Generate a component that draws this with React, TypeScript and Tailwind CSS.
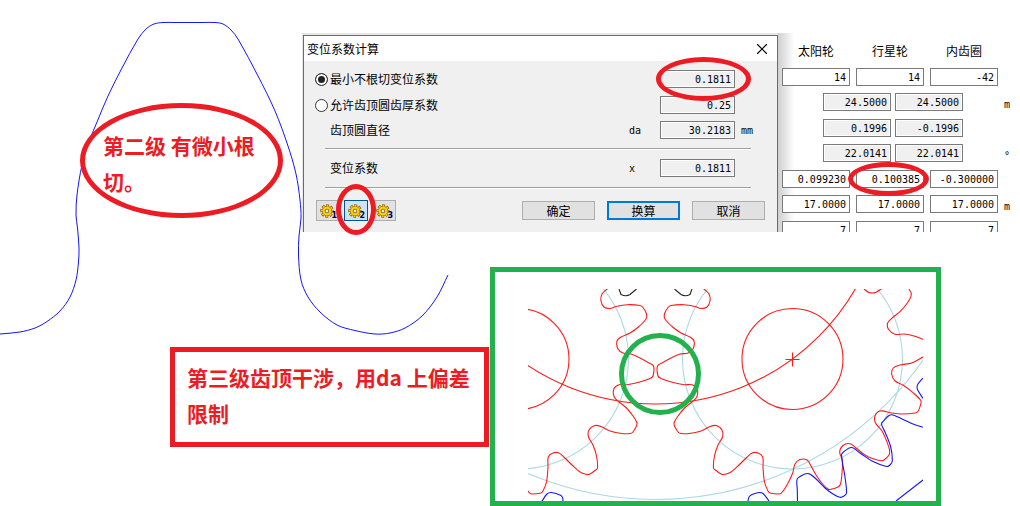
import React from "react";
import { X } from "lucide-react";

type Point = [number, number];

// Smooth line through all the points, handle length follows the segment so tight corners stay tight
const curve = (pts: Point[]) => {
  const tangents = pts.map((_, i) => {
    const a = pts[Math.max(i - 1, 0)];
    const b = pts[Math.min(i + 1, pts.length - 1)];
    const len = Math.hypot(b[0] - a[0], b[1] - a[1]);
    return [(b[0] - a[0]) / len, (b[1] - a[1]) / len];
  });
  let d = `M${pts[0][0]} ${pts[0][1]}`;
  for (let i = 0; i < pts.length - 1; i++) {
    const [x1, y1] = pts[i];
    const [x2, y2] = pts[i + 1];
    const h = Math.hypot(x2 - x1, y2 - y1) / 3;
    const [t1, t2] = [tangents[i], tangents[i + 1]];
    d += `C${x1 + t1[0] * h} ${y1 + t1[1] * h} ${x2 - t2[0] * h} ${y2 - t2[1] * h} ${x2} ${y2}`;
  }
  return d;
};

const toothProfile: Point[] = [
  [0, 334], [20, 332], [35, 328], [47, 321.5], [60, 311], [70, 297], [76, 280], [78.5, 262], [79, 248], [77.5, 228],
  [76, 215], [77, 195], [82, 165], [89, 142], [97, 122], [108, 96], [122, 68], [138, 39], [146, 29], [154, 24],
  [163, 22.5], [175, 22.5], [189, 22.5], [203, 22.5], [215, 22.5], [223, 24], [231, 30], [238, 39], [258, 76], [275, 111],
  [288, 146], [296, 174], [300, 200], [301, 218], [299, 236], [298.5, 255], [301, 280], [308, 297], [320, 312],
  [337, 325], [355, 330.5], [375, 334], [390, 333], [405, 328], [422, 316], [437, 297], [448, 275],
];

const planetOutline: Point[] = [
  [702, 287], [704, 289], [709, 294], [710, 301], [707, 307], [701, 308.5], [695, 306.5], [684, 304.7], [671, 305.5],
  [668, 307.5], [664.5, 314], [665, 319], [672, 326.5], [681, 333], [690, 337], [694, 341], [693, 349],
  [688, 353], [680, 354], [671, 358], [662, 363], [657.5, 366], [658, 376], [661, 378.5], [673, 382.5], [684, 384.7],
  [692, 384.7], [697, 388.5], [697, 396.5], [692, 402], [685, 407.5], [678, 416], [674, 423], [675, 427], [678.5, 432.5],
  [681, 433.5], [689, 433.5], [701, 431], [709, 427], [716, 425.5], [722, 430], [722.5, 437], [718, 445],
  [714.5, 456], [713.5, 468], [716, 470.5], [721, 474], [724, 474.5], [731, 472], [739, 465], [746.7, 457.5],
  [752, 453], [758, 453], [762.7, 457], [763, 467], [764.5, 482], [768, 491], [770, 493], [779, 494], [781.500, 493],
  [787, 485], [792.7, 473], [795, 464], [800, 459.5], [807, 460], [811, 466], [816.7, 476], [823, 484.500],
  [828, 489], [831, 489.3], [838, 487], [840.500, 484], [842, 473], [842.3, 460], [839.7, 452], [843, 445.5],
  [850, 443.7], [856, 448], [865, 455], [873, 458.7], [881, 460.7], [884, 460], [889, 455], [889.500, 450],
  [887, 442], [882, 431], [875.5, 423], [875, 416], [880, 411], [891.7, 413], [903, 414], [915, 413],
  [918, 411.500], [921, 403], [920.500, 400], [913, 392.7], [903, 385], [895, 381], [891.7, 374.3], [893.3, 368],
  [900, 365], [911.7, 363], [923, 357], [932, 352], [932, 343], [923, 339.3], [913, 335.7], [904, 334],
  [895, 334.3], [888.5, 329.3], [887.7, 323], [891.7, 318.3], [900, 311.7], [908, 302], [911.3, 294.5], [909, 289],
];

const ringOutlines: Point[][] = [
  [[542, 501], [547, 494], [551, 492.5], [560, 495], [562.5, 497.5], [563, 501]],
  [[748, 501], [749, 497], [752, 494.5], [759, 492.5], [763, 493.5], [769, 501]],
  [
    [797.5, 502], [797.3, 490], [797, 479.5], [800, 476.5], [808, 473.5], [815, 478], [825, 488], [833, 494],
    [840, 497.3], [844, 496], [846.5, 493], [845, 477], [841.5, 455], [843.5, 452], [851.5, 447.5], [860, 453], [872, 461],
    [886.5, 466.5], [890, 465], [892.3, 461], [890.7, 447], [885, 432], [881.5, 424], [884, 420.5], [889, 415.5],
    [893, 415], [902, 419], [913, 424], [923, 427.3],
  ],
  [[923, 378], [918, 384], [917, 387], [918, 390.500], [923, 398.5]],
  [[896, 501], [923, 480]],
];

const PlanetGear: React.FC<{ mirrored?: boolean }> = ({ mirrored }) => (
  <g transform={mirrored ? "translate(1311 0) scale(-1 1)" : undefined}>
    <circle cx="792.5" cy="359" r="110" stroke="#add8e6" />
    <circle cx="792.5" cy="359" r="50.5" />
    <path d={curve(planetOutline)} />
    <path d="M864 289Q872 297 881 289" />
    <path d="M674.5 289L681 294.5Q685 297 690 294.5L692 289" stroke="#222" />
  </g>
);

const GearMesh = () => (
  <svg viewBox="528 289 395 212" className="block h-auto w-full" fill="none" stroke="#ff1a1a" strokeWidth="1.1">
    <circle cx="655.5" cy="173" r="326.5" stroke="#add8e6" />
    <PlanetGear mirrored />
    <PlanetGear />
    <circle cx="655.5" cy="173" r="231" />
    <path d="M785.5 359.5h14M792.5 352.5v14" />
    {ringOutlines.map((pts, i) => (
      <path key={i} d={curve(pts)} stroke="#1414ff" />
    ))}
  </svg>
);

const GearIcon = () => (
  <svg viewBox="0 0 14 14" className="size-3.5" fill="none">
    <circle cx="7" cy="7" r="5.4" stroke="#94690a" strokeWidth="2.8" strokeDasharray="2.8 1.44" strokeDashoffset="1.4" />
    <circle cx="7" cy="7" r="4.8" fill="#ffd000" stroke="#94690a" strokeWidth="0.8" />
    <circle cx="7" cy="7" r="5.2" stroke="#ffd000" strokeWidth="1.6" strokeDasharray="1.4 2.684" strokeDashoffset="0.7" />
    <circle cx="7" cy="7" r="1.8" fill="#eee" stroke="#85786a" strokeWidth="1.1" />
  </svg>
);

const Mark: React.FC<{ className: string }> = ({ className }) => (
  <span className={`pointer-events-none absolute z-10 rounded-[50%] border-5 ${className}`} />
);

interface FieldProps {
  label: string;
  value: string;
  readOnly?: boolean;
  id?: string;
  wide?: boolean;
}

const Field = ({ label, value, readOnly, id, wide }: FieldProps) => (
  <input
    id={id}
    aria-label={label}
    defaultValue={value}
    readOnly={readOnly}
    className={`block h-[18px] ${wide ? "w-[75px]" : "w-[68px]"} border border-[#7a7a7a] pr-[3px] text-right font-['DejaVu_Sans_Mono',monospace] text-[10px] leading-4 shadow-[inset_0_0_0_1px_#fff] ${readOnly ? "bg-[#f0f0f0]" : "bg-white"}`}
  />
);

interface RowProps {
  label: React.ReactNode;
  symbol?: string;
  unit?: string;
  children: React.ReactNode;
}

const DialogRow = ({ label, symbol, unit, children }: RowProps) => (
  <div className="flex h-[18px] items-center font-['DejaVu_Sans_Mono',monospace] text-[10px]">
    <div className="flex-1 font-['Noto_Sans_CJK_SC',sans-serif] text-xs">{label}</div>
    <span className="w-[31px]">{symbol}</span>
    {children}
    <span className="ml-1.5 w-3">{unit}</span>
  </div>
);

const RadioLabel = ({ text, checked }: { text: string; checked?: boolean }) => (
  <label className="flex items-center gap-0.5">
    <input
      type="radio"
      name="mode"
      defaultChecked={checked}
      className="size-[13px] appearance-none rounded-full border border-[#333] bg-white checked:bg-[#222] checked:shadow-[inset_0_0_0_2px_#fff]"
    />
    {text}
  </label>
);

const Separator = () => <hr className="mr-0.5 ml-2.5 h-0.5 border-t border-b border-t-[#a0a0a0] border-b-white" />;

const ShiftDialog = () => (
  <section className="flex min-w-0 flex-1 flex-col bg-[#e6e6e6] pt-0.5 pl-px">
    <div className="flex flex-1 flex-col border-x border-t border-[#6b6b6b] bg-[#f0f0f0]">
      <header className="flex h-[25px] items-center justify-between bg-white pr-1.5 pl-[3px]">
        <h1 className="text-xs">变位系数计算</h1>
        <button aria-label="关闭">
          <X size={18} strokeWidth={1.5} />
        </button>
      </header>
      <div className="pt-[9px] pr-6 pl-[11px]">
        <div className="flex flex-col gap-2">
          <DialogRow label={<RadioLabel text="最小不根切变位系数" checked />}>
            <div className="relative">
              <Field label="最小不根切变位系数" value="0.1811" readOnly wide />
              <Mark className="-top-[13px] -left-1 h-11 w-[95px] border-[#ed1c24]" />
            </div>
          </DialogRow>
          <DialogRow label={<RadioLabel text="允许齿顶圆齿厚系数" />}>
            <Field label="允许齿顶圆齿厚系数" value="0.25" readOnly wide />
          </DialogRow>
        </div>
        <div className="mt-[7px] mb-[9px]">
          <DialogRow label={<label htmlFor="da" className="pl-[15px]">齿顶圆直径</label>} symbol="da" unit="mm">
            <Field id="da" label="齿顶圆直径" value="30.2183" readOnly wide />
          </DialogRow>
        </div>
        <Separator />
        <div className="mt-[9px] mb-2.5">
          <DialogRow label={<label htmlFor="x" className="pl-[15px]">变位系数</label>} symbol="x">
            <Field id="x" label="变位系数" value="0.1811" readOnly wide />
          </DialogRow>
        </div>
        <Separator />
      </div>
      <footer className="mt-[11px] flex items-center justify-between pr-3 pl-3">
        <div className="flex gap-1">
          {["1", "2", "3"].map((n) => (
            <div key={n} className="relative">
              <button
                className={`relative block h-[21px] w-6 border pl-[3px] ${n === "2" ? "border-[#005499] bg-[#cce4f7]" : "border-[#adadad] bg-[#e1e1e1]"}`}
              >
                <GearIcon />
                <span className="absolute right-0.5 bottom-0 font-['DejaVu_Sans',sans-serif] text-[8px] leading-[8px] font-bold text-[#000050]">
                  {n}
                </span>
              </button>
              {n === "2" && <Mark className="-top-4 -left-2 h-[51px] w-10 border-[#ed1c24]" />}
            </div>
          ))}
        </div>
        <div className="flex gap-3 text-xs">
          <button className="h-[19px] w-[73px] border border-[#adadad] bg-[#e1e1e1] leading-4">确定</button>
          <button className="h-[19px] w-[73px] border-2 border-[#0078d7] bg-[#e1e1e1] leading-[15px]">换算</button>
          <button className="h-[19px] w-[73px] border border-[#adadad] bg-[#e1e1e1] leading-4">取消</button>
        </div>
      </footer>
    </div>
  </section>
);

const gearNames = ["太阳轮", "行星轮", "内齿圈"];

const gearRows: { values: string[]; computed?: boolean; unit?: string }[] = [
  { values: ["14", "14", "-42"] },
  { values: ["24.5000", "24.5000"], computed: true, unit: "m" },
  { values: ["0.1996", "-0.1996"], computed: true },
  { values: ["22.0141", "22.0141"], computed: true, unit: "°" },
  { values: ["0.099230", "0.100385", "-0.300000"] },
  { values: ["17.0000", "17.0000", "17.0000"], unit: "m" },
  { values: ["7", "7", "7"] },
];

const GearPanel = () => (
  <section className="w-[242px] shrink-0 overflow-hidden bg-[linear-gradient(to_right,#cfcfcf,#fff_16px)] pr-2.5 pl-1">
    <div className="flex h-[35px] gap-1.5 text-center text-xs leading-9">
      {gearNames.map((name) => (
        <span key={name} className="w-[68px]">{name}</span>
      ))}
    </div>
    {gearRows.map((row, r) => (
      <div key={r} className={`flex pb-2 even:pb-[7px] ${row.computed ? "gap-1 pl-[41px]" : "gap-1.5"}`}>
        {row.values.map((value, i) => (
          <div key={i} className="relative">
            <Field label={`${gearNames[i]} ${r + 1}`} value={value} readOnly={row.computed} />
            {value === "0.100385" && <Mark className="-top-2 -left-2 h-[34px] w-[81px] border-[#ed1c24]" />}
          </div>
        ))}
        <span className="ml-auto self-end font-['DejaVu_Sans_Mono',monospace] text-[10px] leading-3">{row.unit}</span>
      </div>
    ))}
  </section>
);

export default function App() {
  return (
    <main className="relative overflow-hidden bg-white font-['Noto_Sans_CJK_SC',sans-serif] text-black">
      <svg className="absolute top-0 left-0 h-[340px] w-[450px]" fill="none" stroke="#1414ff">
        <path d={curve(toothProfile)} />
      </svg>

      <div className="relative flex h-[232px] pt-[33px]">
        <div className="w-[302px] shrink-0 pl-20">
          <p className="relative mt-[70px] h-[115px] w-[203px] pt-6 pr-5 pl-[23px] text-[21px] leading-9 font-bold text-[#ed1c24]">
            第二级 有微小根切。
            <Mark className="inset-0 border-[#ed1c24]" />
          </p>
        </div>
        <ShiftDialog />
        <GearPanel />
      </div>

      <div className="relative flex items-start gap-px pr-[79px] pl-[170px]">
        <p className="mt-[115px] w-[319px] shrink-0 border-5 border-[#ed1c24] px-3 pt-[7px] pb-[11px] text-[21px] leading-9 font-bold text-[#ed1c24]">
          第三级齿顶干涉，用da 上偏差限制
        </p>
        <figure className="relative mt-[35px] flex-1 border-5 border-[#22b14c] bg-white pt-[17px] pr-[13px] pl-[33px]">
          <GearMesh />
          <Mark className="top-[61px] left-[124px] size-[82px] border-[#22b14c]" />
        </figure>
      </div>
    </main>
  );
}
